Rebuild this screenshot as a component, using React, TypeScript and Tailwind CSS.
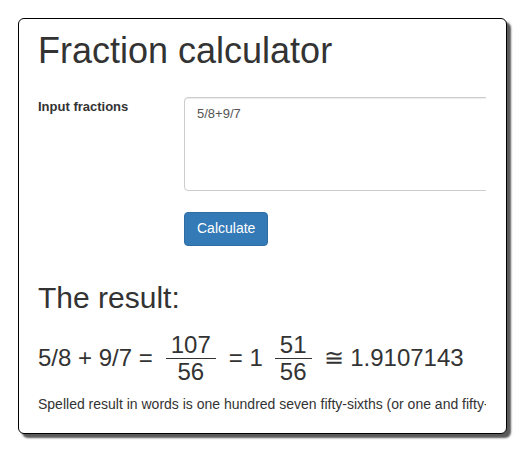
import React, { useState } from 'react';

const Fraction: React.FC<{ num: string; den: string }> = ({ num, den }) => (
  <span className="inline-flex flex-col items-center leading-[26px]">
    <span className="px-[5px] border-b border-[#333]">{num}</span>
    <span className="px-[5px]">{den}</span>
  </span>
);

const App: React.FC = () => {
  const [input, setInput] = useState('5/8+9/7');

  return (
    <div className="min-h-screen bg-white pt-[18px] pl-[18px] font-['Liberation_Sans',Arial,sans-serif] text-[#333]">
      <div className="w-[489px] h-[416px] bg-white border border-black rounded-md shadow-[4px_4px_2px_#5a5a5a] pt-[12px] pl-[19px] pr-[20px]">
        <div className="overflow-hidden">
          <h1 className="text-[36px] leading-[1.1]">Fraction calculator</h1>

          <div className="flex mt-[26px]">
            <label className="w-[146px] shrink-0 text-[13px] font-bold leading-[1.42857] pt-px">Input fractions</label>
            <div className="flex flex-col">
              <textarea
                value={input}
                onChange={e => setInput(e.target.value)}
                className="w-[330px] h-[94px] border border-[#ccc] rounded-[4px] px-[12px] pt-[7px] text-[13px] leading-[1.42857] text-[#555] resize-none outline-none shadow-[inset_0_1px_1px_rgba(0,0,0,0.075)]"
              />
              <div className="mt-[21px]">
                <button className="h-[34px] px-[12px] bg-[#337ab7] border border-[#2e6da4] rounded-[4px] text-white text-[14px]">
                  Calculate
                </button>
              </div>
            </div>
          </div>

          <h2 className="text-[30px] leading-[1.1] mt-[35px]">The result:</h2>

          <div className="flex items-center mt-[18px] text-[24px] leading-[26px] whitespace-nowrap">
            <span>5/8 + 9/7 =</span>
            <span className="ml-[13px]"><Fraction num="107" den="56" /></span>
            <span className="ml-[13px]">= 1</span>
            <span className="ml-[12px]"><Fraction num="51" den="56" /></span>
            <span className="ml-[12px]">≅ 1.9107143</span>
          </div>

          <p className="mt-[10px] text-[14px] leading-[18px] whitespace-nowrap">
            Spelled result in words is one hundred seven fifty-sixths (or one and fifty-one fifty-sixths).
          </p>
        </div>
      </div>
    </div>
  );
};

export default App;
